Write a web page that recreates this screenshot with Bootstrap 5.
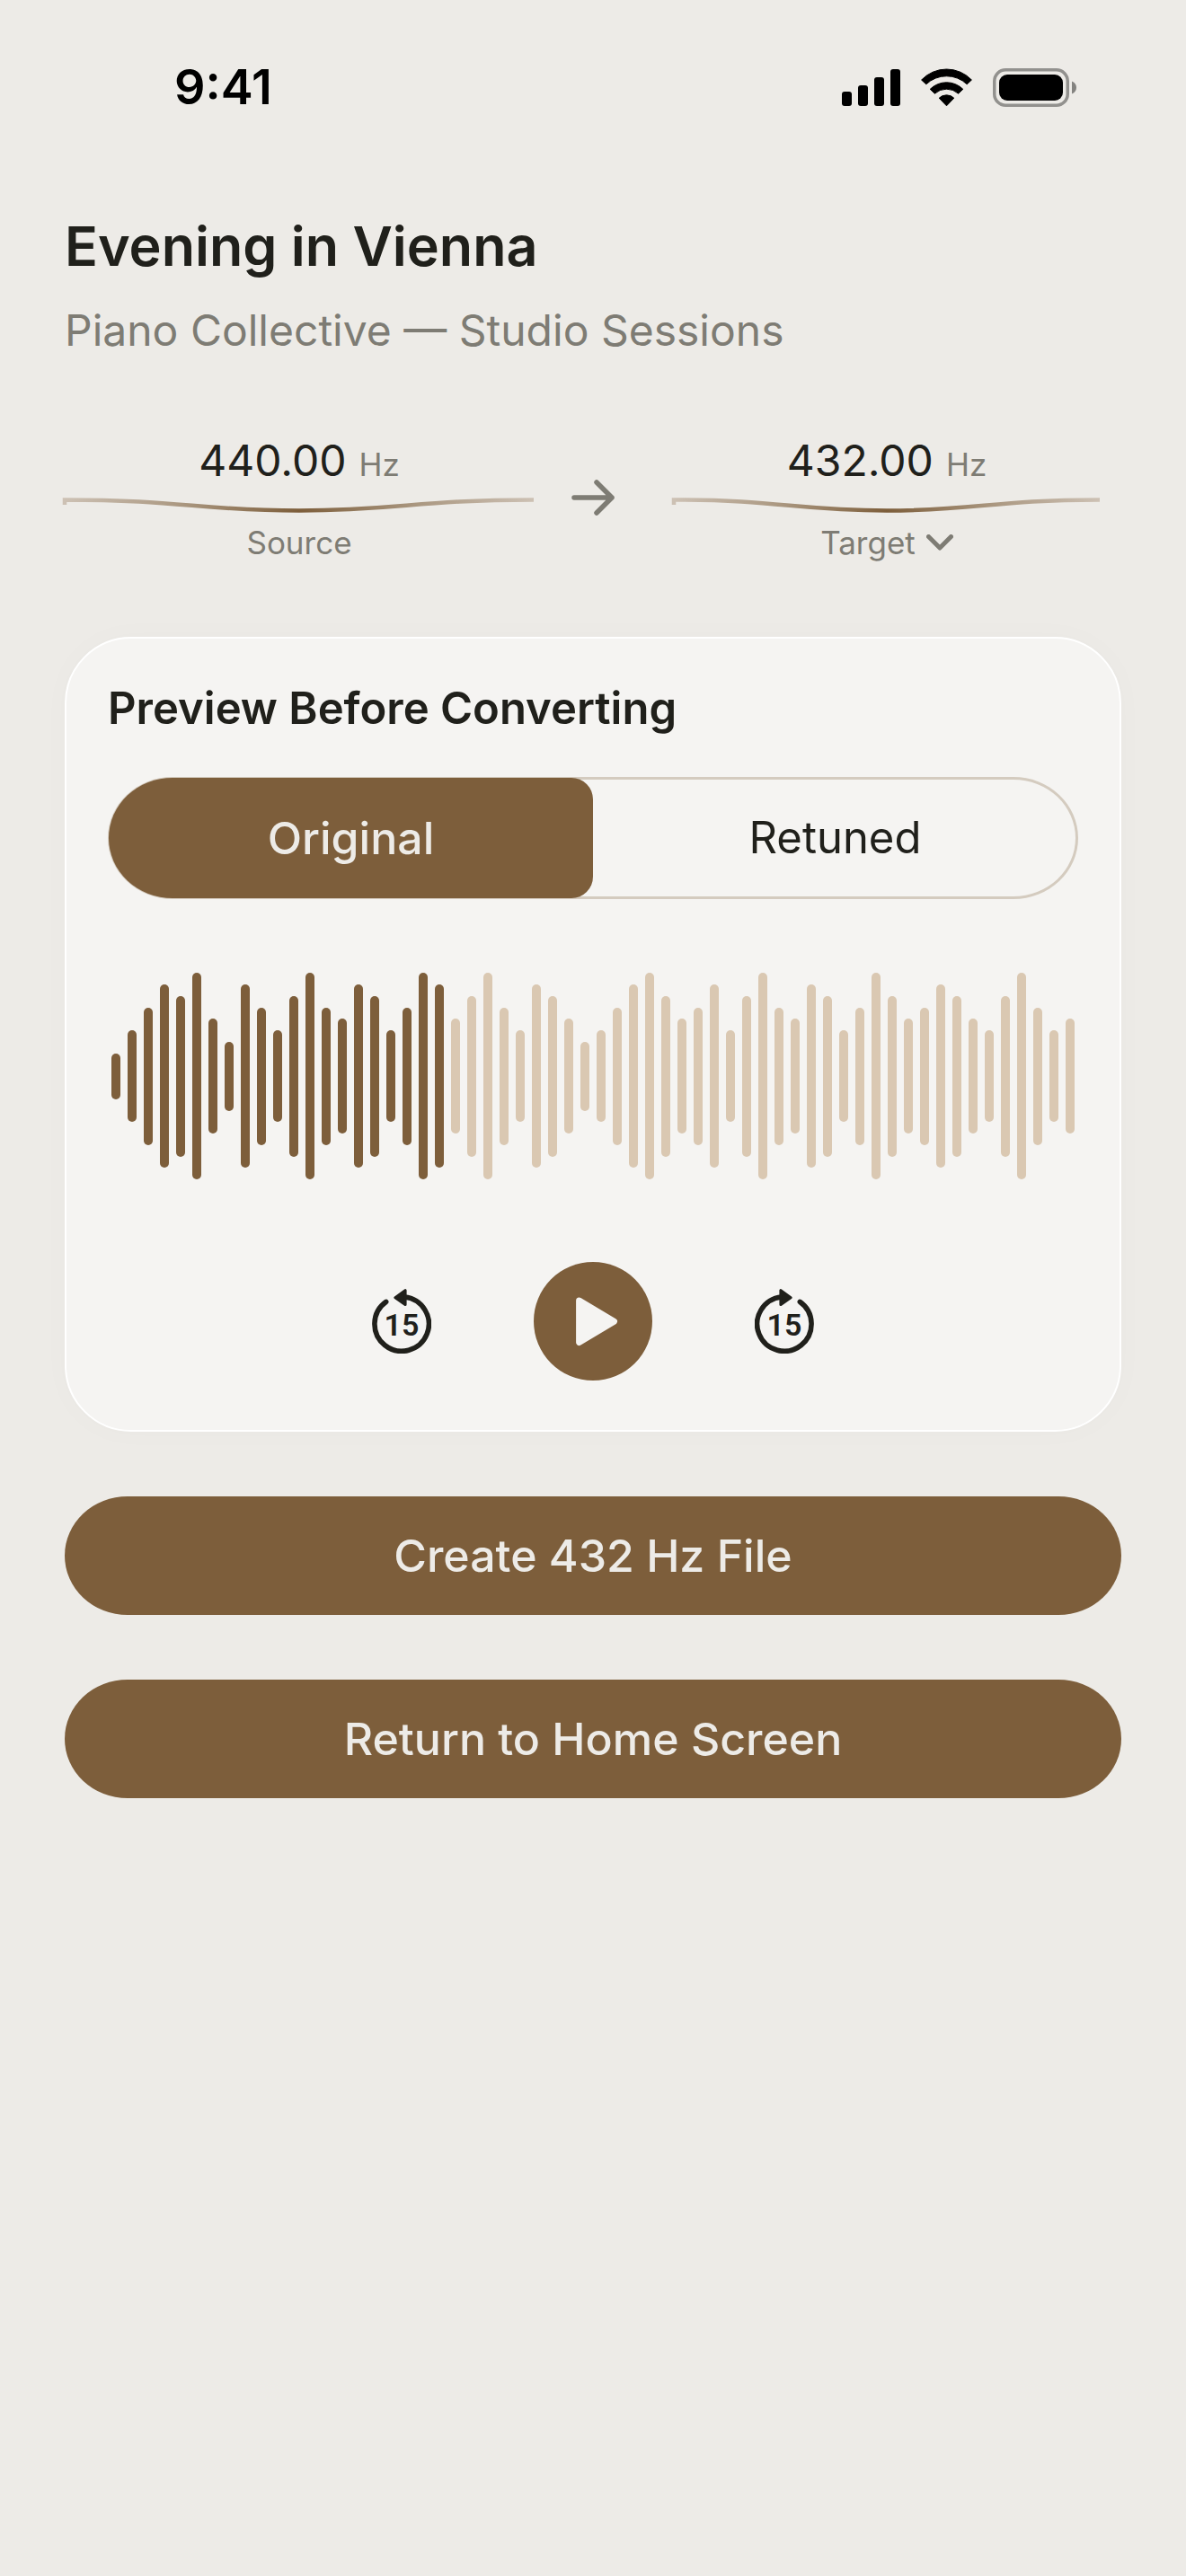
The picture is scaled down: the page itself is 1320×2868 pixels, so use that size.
<!DOCTYPE html>
<html lang="en">
<head>
<meta charset="utf-8">
<meta name="viewport" content="width=device-width, initial-scale=1">
<title>Evening in Vienna</title>
<link rel="stylesheet" href="https://cdn.jsdelivr.net/npm/bootstrap@5.3.0/dist/css/bootstrap.min.css">
<style>
  :root {
    --paper: #edebe7;
    --ink: #20201b;
    --muted: #7e7c74;
    --wood: #7d5e3b;
    --sand: #dac8b2;
  }
  body {
    background: var(--paper);
    color: var(--ink);
    font-family: Inter, "Liberation Sans", sans-serif;
    font-size: 49px;
    line-height: 60px;
  }
  svg { display: block; flex: none; }
  .status-bar { padding: 64px 122px 0 194px; color: #000; }
  .status-time { font-size: 54px; line-height: 66px; font-weight: 600; }
  .status-icons { gap: 23px; }
  .screen { padding: 104px 72px 72px; }
  .track-title { font-size: 61px; line-height: 80px; font-weight: 600; }
  .track-artist { margin-top: 24px; font-size: 48px; color: var(--muted); }

  .pitch-row { margin-top: 85px; grid-template-columns: 1fr 132px 1fr; }
  .pitch-value { font-size: 48px; gap: 14px; }
  .pitch-unit { font-size: 35px; line-height: 42px; color: var(--muted); }
  .pitch-label { font-size: 35px; line-height: 42px; gap: 12px; color: var(--muted); }
  .pitch-target { padding: 0 24px; color: inherit; line-height: inherit; }
  .pitch-wave { width: 100%; height: 24px; margin: 8px 0; overflow: visible; }

  .preview-card {
    margin-top: 84px;
    padding: 48px 46px 55px;
    background: #f5f4f2;
    border: 2px solid #fff;
    border-radius: 74px;
    box-shadow: 0 0 36px rgba(60, 50, 30, .02);
  }
  .preview-title { font-size: 49px; line-height: 60px; font-weight: 600; }
  .segments {
    height: 136px;
    margin-top: 46px;
    padding: 1px;
    border-radius: 72px / 68px;
    box-shadow: inset 0 0 0 3px #d4cbbf;
  }
  .segment { cursor: pointer; }
  .segment-first { border-radius: 71px 24px 24px 71px / 67px 24px 24px 67px; }
  .segment-last { border-radius: 24px 71px 71px 24px / 24px 67px 67px 24px; }
  .btn-check:checked + .segment { background: var(--wood); color: var(--paper); font-size: 50px; font-weight: 500; }
  .btn-check:focus-visible + .segment { outline: 4px solid var(--sand); }

  .waveform { height: 240px; margin-top: 77px; padding: 0 4px; }
  .bar { width: 10px; border-radius: 5px; background: var(--sand); }
  .bar-played { background: var(--wood); }

  .controls { margin-top: 87px; gap: 114px; }
  .icon-btn { color: var(--ink); line-height: 1; }
  .play-btn { width: 132px; height: 132px; background: var(--wood); color: #f5f4f2; }
  .skip-text { font: 600 34px Roboto, sans-serif; }

  .wide-btn {
    height: 132px;
    margin-top: 72px;
    background: var(--wood);
    color: var(--paper);
    font-size: 50px;
    font-weight: 500;
    line-height: 60px;
    border: 0;
    border-radius: 70px / 66px;
  }
  .wide-btn:hover { background: #6d5132; color: var(--paper); }
</style>
<script src="https://cdn.jsdelivr.net/npm/bootstrap@5.3.0/dist/js/bootstrap.bundle.min.js"></script>
</head>
<body>

<div class="status-bar d-flex align-items-center justify-content-between">
  <span class="status-time">9:41</span>
  <div class="status-icons d-flex align-items-center">
    <svg width="65" height="42" viewBox="0 0 65 42" fill="currentColor" role="img" aria-label="Signal">
      <rect x="0" y="26" width="11" height="16" rx="3"/>
      <rect x="18" y="19" width="11" height="23" rx="3"/>
      <rect x="36" y="10" width="11" height="32" rx="3"/>
      <rect x="54" y="1" width="11" height="41" rx="3"/>
    </svg>
    <svg width="57" height="43" viewBox="0 0 57 43" fill="currentColor" stroke="currentColor" stroke-width="1" stroke-linejoin="round" role="img" aria-label="Wi-Fi">
      <path d="M.6 13A38.500 38.500 0 0 1 56.400 13L51.200 17.800A33 33 0 0 0 5.800 17.800Z"/>
      <path d="M10.200 23.300A26 26 0 0 1 46.800 23.300L41.600 28.200A19.500 19.500 0 0 0 15.400 28.200Z"/>
      <path d="M20.200 33.200A12 12 0 0 1 36.800 33.200L28.500 41.800Z"/>
    </svg>
    <svg width="93" height="43" viewBox="0 0 93 43" role="img" aria-label="Battery full">
      <rect x="1.750" y="1.750" width="81.500" height="39.500" rx="12.500" fill="none" stroke="#92918e" stroke-width="3.500"/>
      <rect x="7" y="7" width="71" height="29" rx="9"/>
      <path d="M88 14.500C91.500 16 93 18.500 93 21.500S91.500 27 88 28.500Z" fill="#848380"/>
    </svg>
  </div>
</div>

<main class="screen">
  <h1 class="track-title mb-0">Evening in Vienna</h1>
  <p class="track-artist mb-0">Piano Collective — Studio Sessions</p>

  <section class="pitch-row d-grid align-items-center">
    <div>
      <div class="pitch-value d-flex align-items-baseline justify-content-center">440.00 <span class="pitch-unit">Hz</span></div>
      <svg class="pitch-wave" viewBox="0 0 522 24" preserveAspectRatio="none" fill="none" aria-hidden="true">
        <defs>
          <linearGradient id="string" gradientUnits="userSpaceOnUse" x1="0" y1="0" x2="522" y2="0">
            <stop offset="0" stop-color="#cdc1b4"/>
            <stop offset=".25" stop-color="#aa9780"/>
            <stop offset=".5" stop-color="#7d5e3b"/>
            <stop offset=".75" stop-color="#aa9780"/>
            <stop offset="1" stop-color="#cdc1b4"/>
          </linearGradient>
        </defs>
        <path d="M0 11V5.500C130 5.500 150 17.500 261 17.500S392 5.500 522 5.500" stroke="url(#string)" stroke-width="4.500" vector-effect="non-scaling-stroke"/>
      </svg>
      <div class="pitch-label text-center">Source</div>
    </div>
    <svg class="mx-auto" width="48" height="40" viewBox="0 0 48 40" fill="none" stroke="#7e7c74" stroke-width="5.500" stroke-linecap="round" stroke-linejoin="round" aria-hidden="true">
      <path d="M3 20H45M28 3L45 20L28 37"/>
    </svg>
    <button type="button" class="pitch-target bg-transparent border-0 w-100">
      <span class="pitch-value d-flex align-items-baseline justify-content-center">432.00 <span class="pitch-unit">Hz</span></span>
      <svg class="pitch-wave" viewBox="0 0 522 24" preserveAspectRatio="none" fill="none" aria-hidden="true">
        <path d="M0 11V5.500C130 5.500 150 17.500 261 17.500S392 5.500 522 5.500" stroke="url(#string)" stroke-width="4.500" vector-effect="non-scaling-stroke"/>
      </svg>
      <span class="pitch-label d-flex align-items-center justify-content-center">Target
        <svg width="30" height="18" viewBox="0 0 30 18" fill="none" stroke="#7e7c74" stroke-width="5" stroke-linecap="round" stroke-linejoin="round" aria-hidden="true"><path d="M2.500 2.500L15 15L27.500 2.500"/></svg>
      </span>
    </button>
  </section>

  <section class="preview-card">
    <h2 class="preview-title mb-0">Preview Before Converting</h2>

    <div class="segments d-flex" role="radiogroup" aria-label="Preview version">
      <input type="radio" class="btn-check" name="version" id="original" checked>
      <label class="segment segment-first d-flex align-items-center justify-content-center w-50" for="original">Original</label>
      <input type="radio" class="btn-check" name="version" id="retuned">
      <label class="segment segment-last d-flex align-items-center justify-content-center w-50" for="retuned">Retuned</label>
    </div>

    <div class="waveform d-flex align-items-center justify-content-between" id="waveform" aria-hidden="true"></div>

    <div class="controls d-flex align-items-center justify-content-center">
      <button type="button" class="icon-btn btn border-0 p-0" aria-label="Back 15 seconds">
        <svg width="66" height="72" viewBox="0 0 66 72" fill="none" stroke="currentColor" stroke-linecap="round" stroke-linejoin="round">
          <path d="M15.700 14.400A30.200 30.200 0 1 0 36 9" stroke-width="5.600"/>
          <path d="M26 9.700L37 1.700V17.500Z" fill="currentColor" stroke-width="3.200"/>
          <text class="skip-text" x="33" y="52" text-anchor="middle" fill="currentColor" stroke="none">15</text>
        </svg>
      </button>
      <button type="button" class="play-btn btn border-0 rounded-circle p-0" aria-label="Play">
        <svg width="132" height="132" viewBox="0 0 132 132" fill="currentColor" stroke="currentColor" stroke-width="7" stroke-linejoin="round">
          <path d="M50.600 43L89.500 66.200L50.600 89.500Z"/>
        </svg>
      </button>
      <button type="button" class="icon-btn btn border-0 p-0" aria-label="Forward 15 seconds">
        <svg width="66" height="72" viewBox="0 0 66 72" fill="none" stroke="currentColor" stroke-linecap="round" stroke-linejoin="round">
          <path d="M50.300 14.400A30.200 30.200 0 1 1 30 9" stroke-width="5.600"/>
          <path d="M40 9.700L29 1.700V17.500Z" fill="currentColor" stroke-width="3.200"/>
          <text class="skip-text" x="33" y="52" text-anchor="middle" fill="currentColor" stroke="none">15</text>
        </svg>
      </button>
    </div>
  </section>

  <button type="button" class="wide-btn btn d-block w-100">Create 432 Hz File</button>
  <button type="button" class="wide-btn btn d-block w-100">Return to Home Screen</button>
</main>

<script>
  // Peak level of each slice of the track, 1 to 9; the first 21 have been played.
  const levels = '246879538647965874698' + '579648753' + '468975684796587469756875479645';
  const played = 21;
  const waveform = document.getElementById('waveform');
  [...levels].forEach((level, i) => {
    const bar = document.createElement('span');
    bar.className = i < played ? 'bar bar-played' : 'bar';
    bar.style.height = Math.round(level * 25.5) + 'px';
    waveform.append(bar);
  });
</script>
</body>
</html>
